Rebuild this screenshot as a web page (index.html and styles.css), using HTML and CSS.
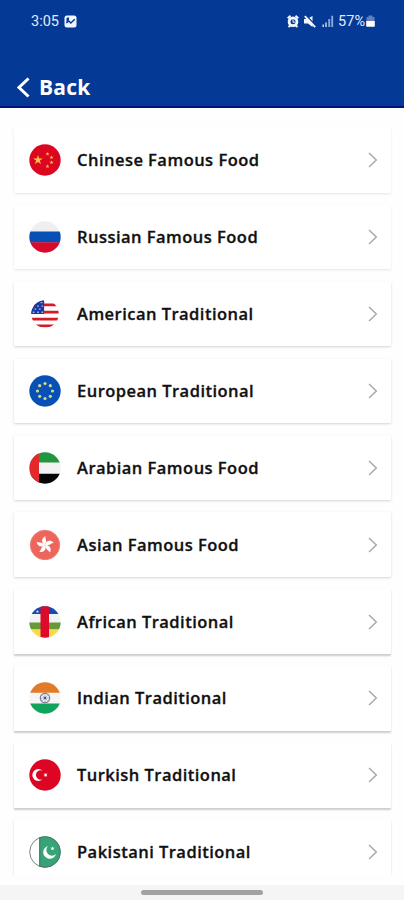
FILE: index.html
```html
<!DOCTYPE html>
<html lang="en">
<head>
<meta charset="utf-8">
<title>Traditional food</title>
<link rel="stylesheet" href="styles.css">
</head>
<body>
<svg class="defs" width="0" height="0" aria-hidden="true">
  <defs>
    <clipPath id="disc"><circle cx="16" cy="16" r="15.7"/></clipPath>
    <polygon id="star" points="0,-5 1.2,-1.6 4.8,-1.5 1.9,.6 2.9,4 0,2 -2.9,4 -1.9,.6 -4.8,-1.5 -1.2,-1.6"/>
    <path id="petal" d="M0 0C-4-2-3.800-7 .5-9C-.2-6.500 2.500-5 0 0Z"/>
    <symbol id="chev" viewBox="0 0 10 16"><path d="M1 1l7.300 7L1 15" fill="none" stroke="#a9a9a9" stroke-width="1.500"/></symbol>
  </defs>
</svg>
<div class="screen">
  <header class="header">
    <div class="status">
      <div class="status-left">
        <span class="time">3:05</span>
        <svg width="13" height="13" viewBox="0 0 13 13"><rect x=".5" y=".5" width="12" height="12" rx="2.500" fill="#f2f6ff"/><path d="M2.500 7.500V3.500q0-1 1-1h1.500v2.500z" fill="#043a95"/><path d="M2.300 8l2.500-2 2 2 4-3.800" fill="none" stroke="#043a95" stroke-width="1.500"/></svg>
      </div>
      <div class="status-right">
        <svg width="12" height="13" viewBox="0 0 12 13"><path d="M.7 3.200L3.500.8M11.300 3.200L8.500.8" stroke="#f2f6ff" stroke-width="2"/><path d="M1.500 12l2.500-2M10.500 12l-2.500-2" stroke="#f2f6ff" stroke-width="2.200"/><circle cx="6" cy="6.800" r="3.900" fill="#043a95" stroke="#f2f6ff" stroke-width="2.800"/><path d="M6 4.500v2.700h2" fill="none" stroke="#f2f6ff"/></svg>
        <svg class="mute" width="12" height="13" viewBox="0 0 12 13"><path d="M0 4h3L8.500 1v11L4 8.500H0z" fill="#f2f6ff"/><path d="M2.500.8l10 10.500" stroke="#043a95" stroke-width="1.300"/><path d="M.8 1.200l10.400 11" stroke="#f2f6ff" stroke-width="1.900"/></svg>
        <svg class="signal" width="12" height="13" viewBox="0 0 12 13"><path d="M1.200 9.500V12M4 7.500V12" stroke="#c8d6ef" stroke-width="1.500"/><path d="M7.200 4V12M10.200.8V12" stroke="#8ba8d6" stroke-width="1.900"/></svg>
        <span class="pct">57%</span>
        <svg width="9" height="12" viewBox="0 0 9 12"><path d="M.5 2h2V.5h4V2h2v4h-8z" fill="#5f7fbd"/><path d="M.2 6h8.600V11q0 .8-.8.800H1q-.8 0-.8-.8z" fill="#fff"/></svg>
      </div>
    </div>
    <div class="back">
      <svg width="14" height="21" viewBox="0 0 14 21"><path d="M12.500 1.500L3 10.500L12.500 19.500" fill="none" stroke="#fff" stroke-width="3"/></svg>
      <span>Back</span>
    </div>
  </header>
  <main class="list">
    <div class="card faint"><svg class="flag" viewBox="0 0 32 32"><g clip-path="url(#disc)"><path fill="#dc0620" d="M0 0h32v32H0z"/><g fill="#fbc540"><use href="#star" x="9" y="16"/><g transform="translate(18.500 10) scale(.42)"><use href="#star"/></g><g transform="translate(22.500 13.500) scale(.42)"><use href="#star"/></g><g transform="translate(22.500 18.500) scale(.42)"><use href="#star"/></g><g transform="translate(18.500 22.300) scale(.42)"><use href="#star"/></g></g></g></svg><span class="name">Chinese Famous Food</span><svg class="chev"><use href="#chev"/></svg></div>
    <div class="card faint"><svg class="flag" viewBox="0 0 32 32"><g clip-path="url(#disc)"><path fill="#efefef" d="M0 0h32v32H0z"/><path fill="#0750b5" d="M0 10.500h32v11H0z"/><path fill="#d80a2c" d="M0 21.300h32V32H0z"/></g></svg><span class="name">Russian Famous Food</span><svg class="chev"><use href="#chev"/></svg></div>
    <div class="card soft"><svg class="flag us" viewBox="0 0 32 32"><g clip-path="url(#disc)"><path fill="#fff" d="M0 0h32v32H0z"/><path stroke="#d51c25" stroke-width="3.200" d="M0 5.500h32M0 13.800h32M0 21.800h32M0 29.500h32"/><path fill="#1a38a0" d="M0 0h15v16H0z"/><path d="M11 3h2M7 7h2M12 7h2M4 10.500h2M9 10.500h2M2 14h2M7 14h2M12 14h2" stroke="#a8b5e4" stroke-width="1.500"/></g></svg><span class="name">American Traditional</span><svg class="chev"><use href="#chev"/></svg></div>
    <div class="card soft"><svg class="flag" viewBox="0 0 32 32"><circle cx="16" cy="16" r="15.700" fill="#0750b5"/><g fill="#d5d68c"><circle cx="16" cy="8.500" r="1.600"/><circle cx="21.300" cy="10.700" r="1.600"/><circle cx="23.500" cy="16" r="1.600"/><circle cx="21.300" cy="21.300" r="1.600"/><circle cx="16" cy="23.500" r="1.600"/><circle cx="10.700" cy="21.300" r="1.600"/><circle cx="8.500" cy="16" r="1.600"/><circle cx="10.700" cy="10.700" r="1.600"/></g></svg><span class="name">European Traditional</span><svg class="chev"><use href="#chev"/></svg></div>
    <div class="card soft"><svg class="flag" viewBox="0 0 32 32"><g clip-path="url(#disc)"><path fill="#f3f3f3" d="M0 0h32v32H0z"/><path fill="#22963f" d="M0 0h32v10.500H0z"/><path fill="#060606" d="M0 21.700h32V32H0z"/><path fill="#e5282c" d="M0 0h10v32H0z"/></g></svg><span class="name">Arabian Famous Food</span><svg class="chev"><use href="#chev"/></svg></div>
    <div class="card soft"><svg class="flag" viewBox="0 0 32 32"><circle cx="16" cy="16" r="14.700" fill="#ee655b" stroke="#e98078"/><g fill="#fff" transform="translate(16 16)"><use href="#petal"/><use href="#petal" transform="rotate(72)"/><use href="#petal" transform="rotate(144)"/><use href="#petal" transform="rotate(216)"/><use href="#petal" transform="rotate(288)"/></g></svg><span class="name">Asian Famous Food</span><svg class="chev"><use href="#chev"/></svg></div>
    <div class="card"><svg class="flag" viewBox="0 0 32 32"><g clip-path="url(#disc)"><path fill="#f3f3f3" d="M0 0h32v32H0z"/><path fill="#174bb0" d="M0 0h32v8H0z"/><path fill="#66993a" d="M0 16.500h32v7H0z"/><path fill="#f8da49" d="M0 23.500h32V32H0z"/><path fill="#dc0a2b" d="M11.500 0h8.500v32h-8.500z"/><g transform="translate(8.500 5.500) scale(.35)" fill="#fbe28a"><use href="#star"/></g></g></svg><span class="name">African Traditional</span><svg class="chev"><use href="#chev"/></svg></div>
    <div class="card"><svg class="flag" viewBox="0 0 32 32"><g clip-path="url(#disc)"><path fill="#f5f5f5" d="M0 0h32v32H0z"/><path fill="#e27a28" d="M0 0h32v10.700H0z"/><path fill="#10a359" d="M0 21.500h32V32H0z"/></g><circle cx="16" cy="16" r="4.700" fill="none" stroke="#7b7e98" stroke-width="1.200"/><path d="M16 12v8M12 16h8M13.200 13.200l5.600 5.600M18.800 13.200l-5.600 5.600" stroke="#8588a2" stroke-width=".6"/><circle cx="16" cy="16" r="1.200" fill="#4b4f78"/></svg><span class="name">Indian Traditional</span><svg class="chev"><use href="#chev"/></svg></div>
    <div class="card"><svg class="flag" viewBox="0 0 32 32"><circle cx="16" cy="16" r="15.700" fill="#dc0624"/><path fill="#fff" d="M13.500 11.700A6 6 0 1 0 13.500 20.300A4.700 4.700 0 1 1 13.500 11.700Z"/><g transform="translate(16.500 16) rotate(-18) scale(.48)" fill="#fff"><use href="#star"/></g></svg><span class="name">Turkish Traditional</span><svg class="chev"><use href="#chev"/></svg></div>
    <div class="card"><svg class="flag" viewBox="0 0 32 32"><g clip-path="url(#disc)"><path fill="#fff" d="M0 0h32v32H0z"/><path fill="#36a476" d="M11 0h21v32H11z"/><path d="M10.700 0v32" stroke="#465b51"/></g><circle cx="16" cy="16" r="15.300" fill="none" stroke="#55685f" stroke-width=".8"/><path fill="#fff" d="M19 10A6.500 6.500 0 1 0 27 18A5.500 5.500 0 1 1 19 10Z"/><g transform="translate(23.500 12.500) scale(.45)" fill="#fff"><use href="#star"/></g></svg><span class="name">Pakistani Traditional</span><svg class="chev"><use href="#chev"/></svg></div>
  </main>
  <footer class="nav"><div class="handle"></div></footer>
</div>
</body>
</html>
```
FILE: styles.css
```css
* { box-sizing: border-box; }
body { margin: 0; background: #fefefe; font-family: "Open Sans", "Noto Sans", sans-serif; }
.defs { display: block; height: 0; }
.screen { width: 404px; height: 900px; display: flex; flex-direction: column; overflow: hidden; background: #fefefe; }
.header { flex: none; height: 108px; background: #043a95; border-bottom: 2px solid #00117b; color: #fff; }
.status { height: 41px; padding: 1px 29px 0 31px; display: flex; justify-content: space-between; align-items: center; font: 14.5px Roboto, sans-serif; color: #e2eafa; }
.status-left, .status-right { display: flex; align-items: center; }
.time { margin-right: 5px; }
.mute { margin-left: 5px; }
.signal { margin: 0 4px 0 6px; }
.pct { margin-right: 1px; font-size: 14.5px; }
.back { display: flex; align-items: center; height: 30px; margin-top: 31px; padding-left: 16px; gap: 9px; font-weight: 700; font-size: 21px; letter-spacing: .2px; }
.list { flex: none; height: 767px; padding: 20px 13px 0 14px; display: flex; flex-direction: column; gap: 12.4px; overflow: hidden; }
.card { flex: none; height: 64.5px; padding: 0 13px 0 15px; display: flex; align-items: center; background: #fff; border-radius: 1px; box-shadow: 0 1.5px 2px rgba(0, 0, 0, .2); }
.card.soft { box-shadow: 0 1px 2.5px rgba(0, 0, 0, .17); }
.card.faint { box-shadow: 0 1px 2.5px rgba(0, 0, 0, .1); }
.flag { width: 32px; height: 32px; flex: none; margin-right: 16px; }
.us { width: 28px; height: 28px; margin: 0 18px 0 2px; }
.name { flex: 1; padding-bottom: 1px; font-size: 16.5px; font-weight: 600; letter-spacing: .47px; color: #111; -webkit-text-stroke: .3px #111; white-space: nowrap; }
.chev { width: 10px; height: 16px; flex: none; }
.nav { flex: none; height: 15px; margin-top: 10px; background: #f5f5f5; display: flex; justify-content: center; padding-top: 5px; }
.handle { width: 122px; height: 5px; border-radius: 3px; background: #a2a2a2; }
```
